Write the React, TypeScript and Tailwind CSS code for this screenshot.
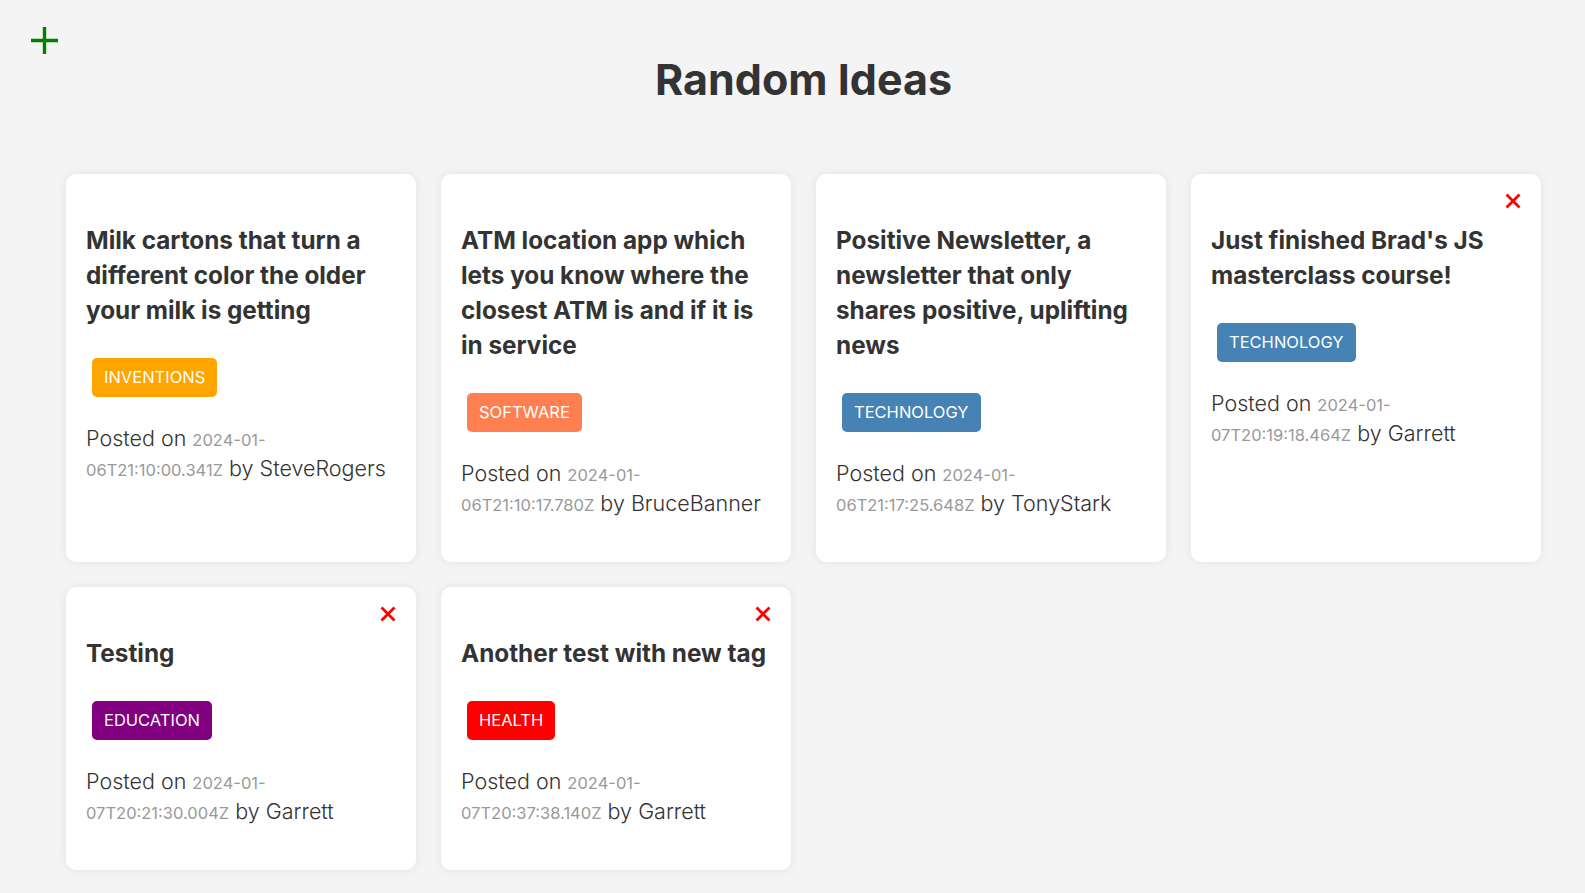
import React from 'react';

interface Idea {
  id: number;
  text: string;
  tag: string;
  date: string;
  username: string;
  deletable: boolean;
}

const ideas: Idea[] = [
  { id: 1, text: 'Milk cartons that turn a different color the older your milk is getting', tag: 'inventions', date: '2024-01-06T21:10:00.341Z', username: 'SteveRogers', deletable: false },
  { id: 2, text: 'ATM location app which lets you know where the closest ATM is and if it is in service', tag: 'software', date: '2024-01-06T21:10:17.780Z', username: 'BruceBanner', deletable: false },
  { id: 3, text: 'Positive Newsletter, a newsletter that only shares positive, uplifting news', tag: 'technology', date: '2024-01-06T21:17:25.648Z', username: 'TonyStark', deletable: false },
  { id: 4, text: "Just finished Brad's JS masterclass course!", tag: 'technology', date: '2024-01-07T20:19:18.464Z', username: 'Garrett', deletable: true },
  { id: 5, text: 'Testing', tag: 'education', date: '2024-01-07T20:21:30.004Z', username: 'Garrett', deletable: true },
  { id: 6, text: 'Another test with new tag', tag: 'health', date: '2024-01-07T20:37:38.140Z', username: 'Garrett', deletable: true },
];

const tagColors: Record<string, string> = {
  inventions: 'bg-[#ffa500]',
  software: 'bg-[#ff7f50]',
  technology: 'bg-[#4682b4]',
  education: 'bg-[#800080]',
  health: 'bg-[#ff0000]',
};

function IdeaCard({ idea }: { idea: Idea }) {
  return (
    <div className="relative rounded-[10px] bg-white px-[20px] pt-[49px] pb-[44px] shadow-[0_0_10px_rgba(0,0,0,0.08)]">
      {idea.deletable && (
        <button className="absolute top-[19px] right-[20px] flex h-[16px] w-[16px] items-center justify-center">
          <svg width="16" height="16" viewBox="0 0 16 16">
            <path d="M1.5 1.5 L14.5 14.5 M14.5 1.5 L1.5 14.5" stroke="#ff0000" strokeWidth="2.8" />
          </svg>
        </button>
      )}
      <h3 className="text-[24.3px] leading-[35px] font-bold text-[#333]">{idea.text}</h3>
      <p
        className={`ml-[6px] mt-[30px] inline-flex h-[39px] items-center rounded-[5px] px-[12px] text-[16.5px] text-white uppercase ${tagColors[idea.tag]}`}
      >
        {idea.tag}
      </p>
      <p className="mt-[26px] text-[21.5px] leading-[30px] font-light text-[#333]">
        Posted on <span className="text-[16.5px] leading-none font-normal text-[#999]">{idea.date}</span> by{' '}
        {idea.username}
      </p>
    </div>
  );
}

export default function App() {
  return (
    <div className="relative min-h-screen bg-[#f4f4f4] font-['Inter',sans-serif]">
      <button className="absolute top-[27px] left-[31px] flex h-[27px] w-[27px] items-center justify-center">
        <svg width="27" height="27" viewBox="0 0 27 27">
          <path d="M13.5 0 V27 M0 13.5 H27" stroke="#008000" strokeWidth="3.4" />
        </svg>
      </button>
      <div className="ml-[66px] w-[1475px] pb-[14px]">
        <h1 className="pt-[55px] text-center text-[43px] leading-[48px] font-bold text-[#333]">Random Ideas</h1>
        <div className="mt-[71px] grid grid-cols-4 gap-[25px]">
          {ideas.map((idea) => (
            <IdeaCard key={idea.id} idea={idea} />
          ))}
        </div>
      </div>
    </div>
  );
}
